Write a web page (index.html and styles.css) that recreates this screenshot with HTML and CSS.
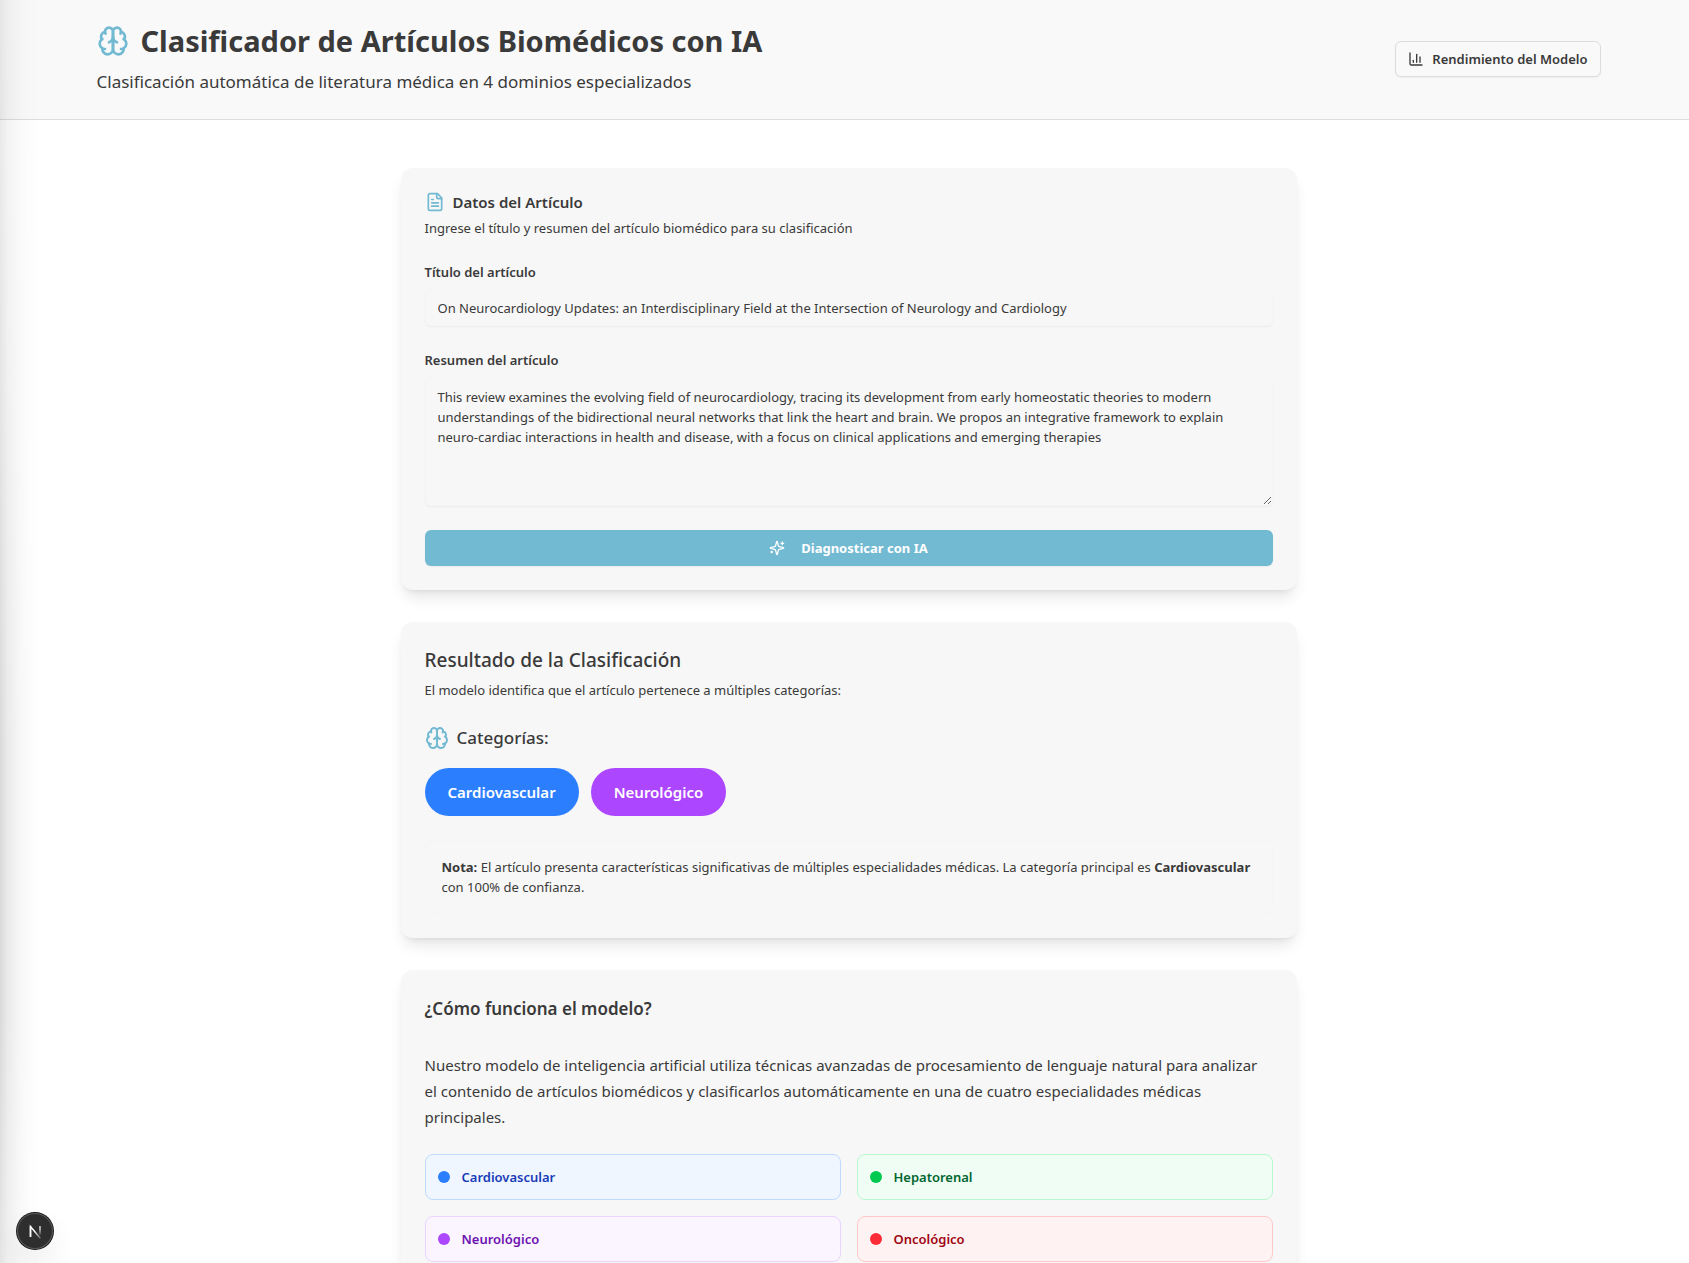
FILE: index.html
```html
<!DOCTYPE html>
<html lang="es">
<head>
  <meta charset="utf-8">
  <meta name="viewport" content="width=device-width, initial-scale=1">
  <title>Clasificador de Artículos Biomédicos con IA</title>
  <link rel="stylesheet" href="styles.css">
</head>
<body>
  <svg class="sprite" aria-hidden="true">
    <symbol id="brain" viewBox="0 0 24 24">
      <path d="M12 5a3 3 0 1 0-5.997.125 4 4 0 0 0-2.526 5.77 4 4 0 0 0 .556 6.588A4 4 0 1 0 12 18Z"/>
      <path d="M12 5a3 3 0 1 1 5.997.125 4 4 0 0 1 2.526 5.77 4 4 0 0 1-.556 6.588A4 4 0 1 1 12 18Z"/>
      <path d="M15 13a4.5 4.5 0 0 1-3-4 4.5 4.5 0 0 1-3 4"/>
      <path d="M17.599 6.5a3 3 0 0 0 .399-1.375"/>
      <path d="M6.003 5.125A3 3 0 0 0 6.401 6.5"/>
      <path d="M3.477 10.896a4 4 0 0 1 .585-.396"/>
      <path d="M19.938 10.5a4 4 0 0 1 .585.396"/>
      <path d="M6 18a4 4 0 0 1-1.967-.516"/>
      <path d="M19.967 17.484A4 4 0 0 1 18 18"/>
    </symbol>
  </svg>

  <header class="header">
    <div class="header-inner">
      <div class="brand">
        <div class="brand-row">
          <svg class="icon icon-xl accent" aria-hidden="true"><use href="#brain"/></svg>
          <h1 class="brand-title">Clasificador de Artículos Biomédicos con IA</h1>
        </div>
        <p class="brand-subtitle">Clasificación automática de literatura médica en 4 dominios especializados</p>
      </div>
      <button type="button" class="btn btn-outline">
        <svg class="icon icon-sm" viewBox="0 0 24 24" aria-hidden="true">
          <path d="M3 3v16a2 2 0 0 0 2 2h16"/><path d="M18 17V9"/><path d="M13 17V5"/><path d="M8 17v-3"/>
        </svg>
        Rendimiento del Modelo
      </button>
    </div>
  </header>

  <main class="main">
    <section class="card">
      <div class="card-header">
        <h2 class="card-title with-icon">
          <svg class="icon icon-md accent" viewBox="0 0 24 24" aria-hidden="true">
            <path d="M15 2H6a2 2 0 0 0-2 2v16a2 2 0 0 0 2 2h12a2 2 0 0 0 2-2V7Z"/><path d="M14 2v4a2 2 0 0 0 2 2h4"/><path d="M10 9H8"/><path d="M16 13H8"/><path d="M16 17H8"/>
          </svg>
          Datos del Artículo
        </h2>
        <p class="card-description">Ingrese el título y resumen del artículo biomédico para su clasificación</p>
      </div>
      <form class="form">
        <div class="field">
          <label for="titulo">Título del artículo</label>
          <input id="titulo" class="control" type="text" value="On Neurocardiology Updates: an Interdisciplinary Field at the Intersection of Neurology and Cardiology">
        </div>
        <div class="field">
          <label for="resumen">Resumen del artículo</label>
          <textarea id="resumen" class="control control-area">This review examines the evolving field of neurocardiology, tracing its development from early homeostatic theories to modern understandings of the bidirectional neural networks that link the heart and brain. We propos an integrative framework to explain neuro-cardiac interactions in health and disease, with a focus on clinical applications and emerging therapies</textarea>
        </div>
        <button type="button" class="btn btn-primary">
          <svg class="icon icon-sm" viewBox="0 0 24 24" aria-hidden="true">
            <path d="M9.937 15.5A2 2 0 0 0 8.5 14.063l-6.135-1.582a.5.5 0 0 1 0-.962L8.5 9.936A2 2 0 0 0 9.937 8.5l1.582-6.135a.5.5 0 0 1 .963 0L14.063 8.5A2 2 0 0 0 15.5 9.937l6.135 1.581a.5.5 0 0 1 0 .964L15.5 14.063a2 2 0 0 0-1.437 1.437l-1.582 6.135a.5.5 0 0 1-.963 0z"/><path d="M20 3v4"/><path d="M22 5h-4"/><path d="M4 17v2"/><path d="M5 18H3"/>
          </svg>
          Diagnosticar con IA
        </button>
      </form>
    </section>

    <section class="card">
      <div class="card-header">
        <h2 class="card-title title-lg">Resultado de la Clasificación</h2>
        <p class="card-description">El modelo identifica que el artículo pertenece a múltiples categorías:</p>
      </div>
      <div class="result">
        <div class="categories">
          <h3 class="card-title title-md with-icon">
            <svg class="icon icon-lg accent" aria-hidden="true"><use href="#brain"/></svg>
            Categorías:
          </h3>
          <div class="badges">
            <span class="badge badge-blue">Cardiovascular</span>
            <span class="badge badge-purple">Neurológico</span>
          </div>
        </div>
        <p class="note"><strong>Nota:</strong> El artículo presenta características significativas de múltiples especialidades médicas. La categoría principal es <strong>Cardiovascular</strong> con 100% de confianza.</p>
      </div>
    </section>

    <section class="card">
      <h2 class="card-title title-info">¿Cómo funciona el modelo?</h2>
      <div class="info">
        <p class="info-text">Nuestro modelo de inteligencia artificial utiliza técnicas avanzadas de procesamiento de lenguaje natural para analizar el contenido de artículos biomédicos y clasificarlos automáticamente en una de cuatro especialidades médicas principales.</p>
        <ul class="domains">
          <li class="domain domain-blue">Cardiovascular</li>
          <li class="domain domain-green">Hepatorenal</li>
          <li class="domain domain-purple">Neurológico</li>
          <li class="domain domain-red">Oncológico</li>
        </ul>
      </div>
    </section>
  </main>

  <div class="edge-shade" aria-hidden="true"></div>

  <button type="button" class="dev-badge" aria-label="Herramientas de desarrollo">
    <svg width="36" height="36" viewBox="0 0 36 36" fill="none" aria-hidden="true">
      <defs>
        <linearGradient id="n-diagonal" x1="18" y1="18" x2="25" y2="26" gradientUnits="userSpaceOnUse"><stop stop-color="#fff"/><stop offset="1" stop-color="#fff" stop-opacity="0.1"/></linearGradient>
        <linearGradient id="n-stem" x1="23" y1="13" x2="23" y2="23" gradientUnits="userSpaceOnUse"><stop offset="0.3" stop-color="#fff" stop-opacity="0.8"/><stop offset="1" stop-color="#fff" stop-opacity="0"/></linearGradient>
      </defs>
      <path d="M13.5 24V13.5L23.5 25.5" stroke="url(#n-diagonal)" stroke-width="1.5"/>
      <path d="M13.5 24V13" stroke="#fff" stroke-width="1.5"/>
      <path d="M23 13v9" stroke="url(#n-stem)" stroke-width="1.5"/>
    </svg>
  </button>
</body>
</html>
```
FILE: styles.css
```css
*, *::before, *::after { box-sizing: border-box; }

:root {
  --text: #3a3a3a;
  --accent: #72b9d2;
  --surface: #f7f7f7;
  --line: #dddddd;
}

html { scrollbar-width: none; }

body {
  margin: 0;
  background: #fff;
  color: var(--text);
  font: 400 13px/20px "Noto Sans", "Open Sans", sans-serif;
}

h1, h2, h3, p, ul { margin: 0; padding: 0; }
ul { list-style: none; }
button, input, textarea { font: inherit; color: inherit; }

.sprite { position: absolute; width: 0; height: 0; }

.icon {
  flex: none;
  fill: none;
  stroke: currentColor;
  stroke-width: 2;
  stroke-linecap: round;
  stroke-linejoin: round;
}
.icon-sm { width: 16px; height: 16px; }
.icon-md { width: 20px; height: 20px; }
.icon-lg { width: 24px; height: 24px; }
.icon-xl { width: 32px; height: 32px; }
.accent { color: var(--accent); }

.header {
  padding: 23px 0 24px 8px;
  background: #f9f9f9;
  border-bottom: 1px solid var(--line);
}
.header-inner {
  display: flex;
  align-items: center;
  justify-content: space-between;
  gap: 24px;
  max-width: 1536px;
  margin: 0 auto;
  padding: 0 16px;
}
.brand { display: grid; gap: 10px; }
.brand-row { display: flex; align-items: center; gap: 12px; }
.brand-title { font-size: 29px; line-height: 36px; font-weight: 700; }
.brand-subtitle { font-size: 17px; line-height: 26px; }

.btn {
  display: flex;
  align-items: center;
  justify-content: center;
  height: 36px;
  padding: 0 12px;
  border: 1px solid transparent;
  border-radius: 6px;
  font-weight: 600;
  cursor: pointer;
}
.btn-outline {
  gap: 8px;
  background: #f9f9f9;
  border-color: var(--line);
  box-shadow: 0 1px 2px rgba(0, 0, 0, 0.05);
}
.btn-primary {
  gap: 16px;
  background: var(--accent);
  color: #fff;
  font-weight: 700;
  box-shadow: 0 1px 2px rgba(0, 0, 0, 0.05);
}

.main {
  display: grid;
  gap: 32px;
  max-width: 936px;
  margin: 0 auto;
  padding: 48px 16px 48px 24px;
}

.card {
  padding: 24px;
  background: var(--surface);
  border-radius: 12px;
  box-shadow: 0 10px 15px -3px rgba(0, 0, 0, 0.1), 0 4px 6px -4px rgba(0, 0, 0, 0.1);
}
.card-header { display: grid; gap: 6px; margin-bottom: 24px; }
.card-title { font-size: 15px; line-height: 20px; font-weight: 600; }
.title-lg { font-size: 19px; line-height: 28px; font-weight: 500; }
.title-md { font-size: 17px; line-height: 28px; font-weight: 500; }
.title-info { font-size: 17px; line-height: 30px; margin-bottom: 28px; }
.with-icon { display: flex; align-items: center; gap: 8px; }

.form { display: grid; gap: 24px; }
.field { display: grid; gap: 8px; }
.field label { font-weight: 600; }

.control {
  width: 100%;
  height: 36px;
  padding: 0 12px;
  border: 1px solid #f5f5f5;
  border-radius: 6px;
  background: transparent;
  box-shadow: 0 1px 2px rgba(0, 0, 0, 0.05);
  outline: none;
}
.control-area { display: block; height: 128px; padding: 8px 12px; resize: vertical; }

.result { display: grid; gap: 24px; }
.categories { display: grid; gap: 16px; }
.badges { display: flex; flex-wrap: wrap; gap: 12px; }
.badge {
  padding: 12px 23px;
  border-radius: 24px;
  color: #fff;
  font-size: 15px;
  line-height: 24px;
  font-weight: 600;
}
.badge-blue { background: #2b7fff; }
.badge-purple { background: #ad46ff; }

.note { padding: 16px; border: 1px solid #f5f5f5; border-radius: 8px; }

.info { display: grid; gap: 24px; }
.info-text { font-size: 15px; line-height: 26px; }
.domains { display: grid; grid-template-columns: 1fr 1fr; gap: 16px; }
.domain {
  display: flex;
  align-items: center;
  gap: 12px;
  padding: 12px;
  border: 1px solid;
  border-radius: 8px;
  font-weight: 600;
}
.domain::before { content: ""; width: 12px; height: 12px; border-radius: 50%; }
.domain-blue { background: #eff6ff; border-color: #bedbff; color: #193cb8; }
.domain-blue::before { background: #2b7fff; }
.domain-green { background: #f0fdf4; border-color: #b9f8cf; color: #016630; }
.domain-green::before { background: #00c950; }
.domain-purple { background: #faf5ff; border-color: #e9d4ff; color: #6e11b0; }
.domain-purple::before { background: #ad46ff; }
.domain-red { background: #fef2f2; border-color: #ffc9c9; color: #9f0712; }
.domain-red::before { background: #fb2c36; }

.edge-shade {
  position: fixed;
  top: 0;
  bottom: 0;
  left: 0;
  width: 40px;
  background: linear-gradient(to right, rgba(0, 0, 0, 0.15), rgba(0, 0, 0, 0.08) 20%, rgba(0, 0, 0, 0.03) 50%, rgba(0, 0, 0, 0.01) 75%, transparent);
  mask-image: linear-gradient(to bottom, rgba(0, 0, 0, 0.5), rgba(0, 0, 0, 0.7) 30%, #000 60%, #000 80%, rgba(0, 0, 0, 0.7));
  pointer-events: none;
}

.dev-badge {
  position: fixed;
  left: 17px;
  bottom: 14px;
  width: 36px;
  height: 36px;
  padding: 0;
  border: 0;
  border-radius: 50%;
  background: #2e2e2e;
  box-shadow: 0 0 0 1px #171717, inset 0 0 0 1px #5a5a5a, 0 16px 32px -8px rgba(0, 0, 0, 0.24);
  cursor: pointer;
}
.dev-badge svg { display: block; }
```
